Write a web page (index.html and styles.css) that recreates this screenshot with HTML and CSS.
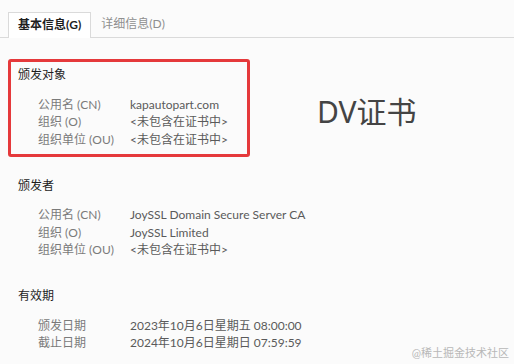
FILE: index.html
```html
<!DOCTYPE html>
<html lang="zh-CN">
<head>
  <meta charset="UTF-8">
  <title>证书</title>
  <link rel="stylesheet" href="styles.css">
</head>
<body>
  <!-- 标签页 -->
  <div class="tabs">
    <span class="tab active">基本信息(G)</span>
    <span class="tab">详细信息(D)</span>
  </div>

  <main class="content">
    <div class="subject-row">
      <section class="section marked">
        <h3>颁发对象</h3>
        <div class="rows">
          <div class="row"><span class="label">公用名 (CN)</span><span class="value">kapautopart.com</span></div>
          <div class="row"><span class="label">组织 (O)</span><span class="value">&lt;未包含在证书中&gt;</span></div>
          <div class="row"><span class="label">组织单位 (OU)</span><span class="value">&lt;未包含在证书中&gt;</span></div>
        </div>
      </section>
      <div class="note">DV证书</div>
    </div>

    <section class="section">
      <h3>颁发者</h3>
      <div class="rows">
        <div class="row"><span class="label">公用名 (CN)</span><span class="value">JoySSL Domain Secure Server CA</span></div>
        <div class="row"><span class="label">组织 (O)</span><span class="value">JoySSL Limited</span></div>
        <div class="row"><span class="label">组织单位 (OU)</span><span class="value">&lt;未包含在证书中&gt;</span></div>
      </div>
    </section>

    <section class="section">
      <h3>有效期</h3>
      <div class="rows">
        <div class="row"><span class="label">颁发日期</span><span class="value">2023年10月6日星期五 08:00:00</span></div>
        <div class="row"><span class="label">截止日期</span><span class="value">2024年10月6日星期日 07:59:59</span></div>
      </div>
    </section>
  </main>

  <div class="watermark">@稀土掘金技术社区</div>
</body>
</html>
```

FILE: styles.css
```css
* {
  box-sizing: border-box;
  margin: 0;
  padding: 0;
}

body {
  background: #fbfbfb;
  color: #333;
  font-family: Lato, 'Noto Sans CJK SC', sans-serif;
  font-size: 12px;
  width: 514px;
  height: 364px;
  overflow: hidden;
  position: relative;
}

/* 标签页 */
.tabs {
  display: flex;
  align-items: flex-end;
  padding: 12px 0 0 8px;
  border-bottom: 1px solid #dadada;
}

.tab {
  height: 25px;
  line-height: 24px;
  padding: 0 10px;
  color: #8f8f8f;
}

.tab.active {
  color: #1e1e1e;
  font-weight: bold;
  background: #fff;
  border: 1px solid #dadada;
  border-bottom: none;
  margin-bottom: -1px;
  height: 26px;
  padding: 0 9px 0 9px;
}

.content {
  padding: 21px 8px 0;
  display: flex;
  flex-direction: column;
  gap: 12.5px;
}

.subject-row {
  display: flex;
  align-items: center;
}

.section {
  border: 3px solid transparent;
  border-radius: 3px;
  padding: 4px 7px 6px;
}

.section.marked {
  width: 242px;
  border-color: #e5393b;
}

.section h3 {
  font-size: 12px;
  font-weight: normal;
  line-height: 17.5px;
  color: #1e1e1e;
}

.rows {
  margin-top: 12px;
  padding-left: 20px;
}

.row {
  display: flex;
  line-height: 17.5px;
  white-space: nowrap;
}

.label {
  width: 92px;
  color: #7a7a7a;
}

.value {
  color: #5a5a5a;
}

.note {
  margin-left: 67px;
  margin-top: 4px;
  font-size: 30px;
  color: #444;
  font-family: 'Noto Sans', 'Noto Sans CJK SC', sans-serif;
}

.watermark {
  position: absolute;
  right: 5px;
  bottom: 4px;
  font-size: 11px;
  color: #b8b8b8;
}
```
